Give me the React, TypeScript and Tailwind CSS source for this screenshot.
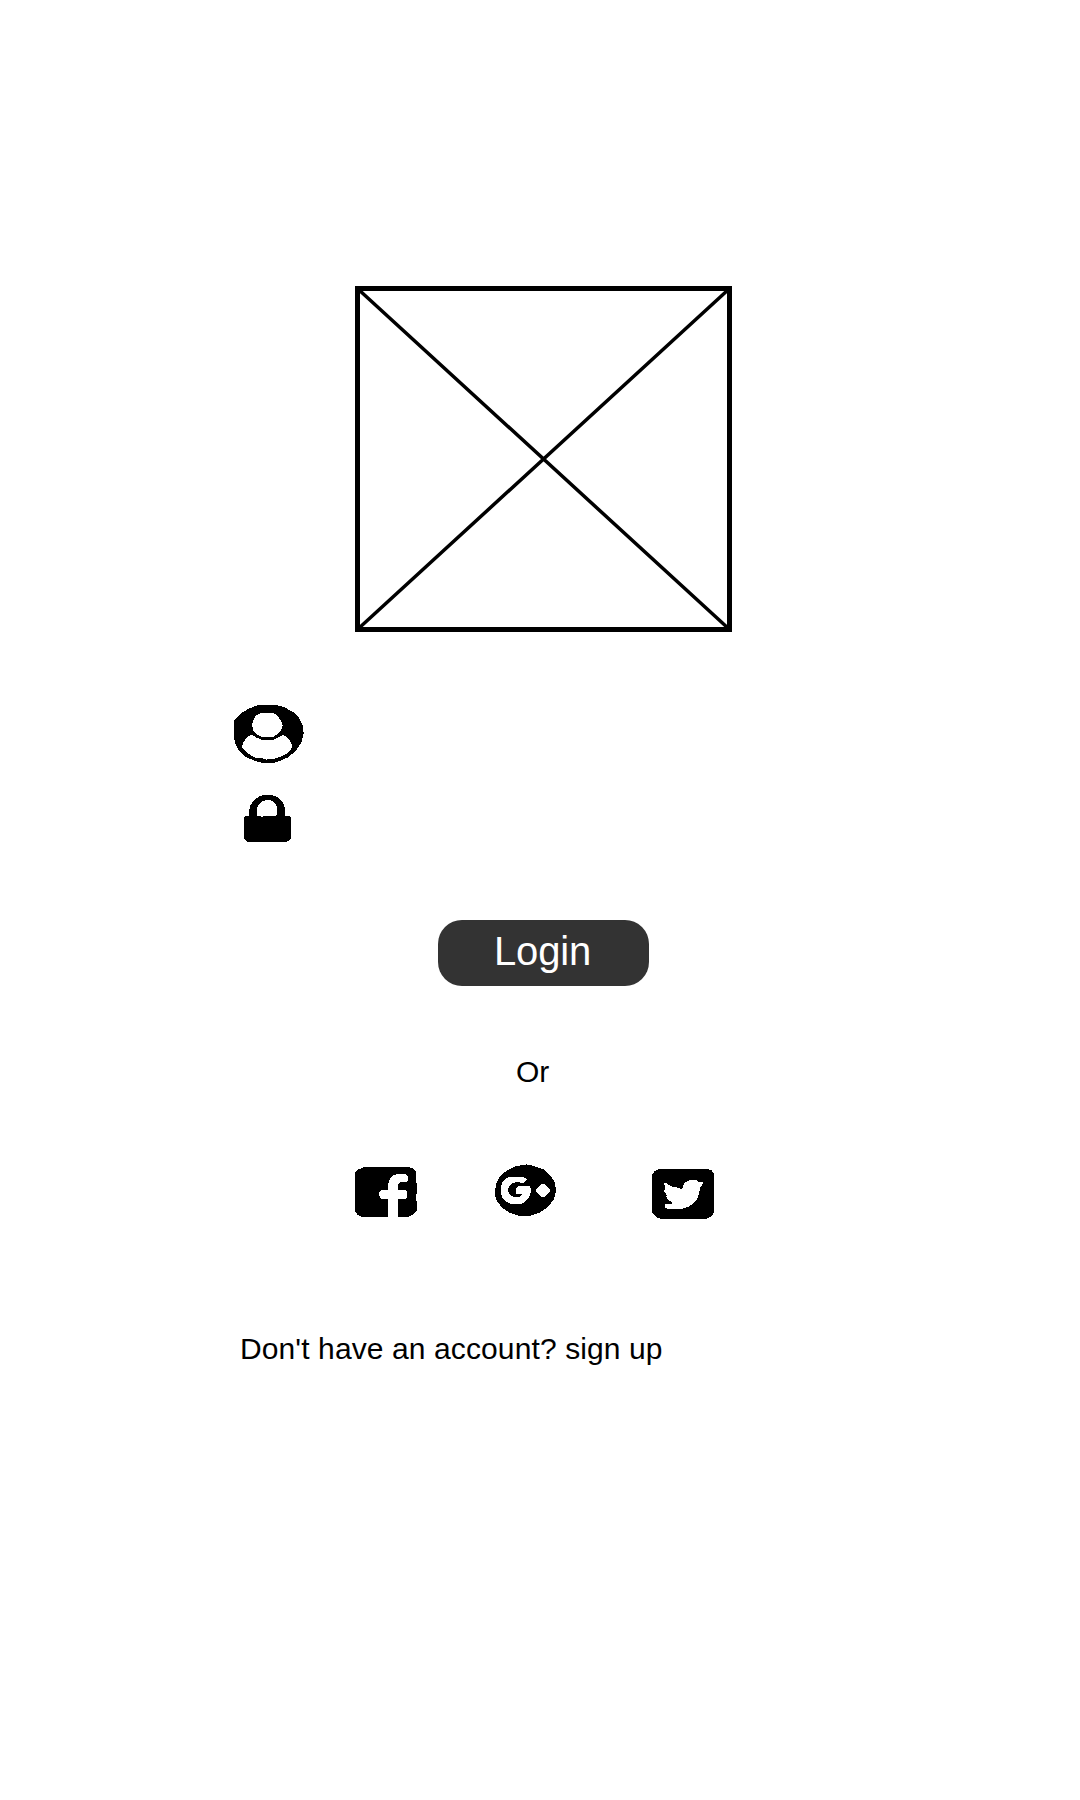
const UserIcon = () => (
  <svg width="70" height="59" viewBox="42 42 210 177" shapeRendering="crispEdges" aria-hidden="true">
    <path d="M42 90L60 72L84 57L112 46L130 44H166L192 51L219 66L238 85L248 106L251 129L245 156L229 181L204 202L180 213L160 219H130L105 213L76 200L57 182L47 163L42 146Z" />
    <path fill="#fff" d="M122 69H159L171 76L183 92L188 105L183 121L173 132L160 141H124L110 132L100 121L96 105L99 92L108 76Z" />
    <path fill="#fff" d="M93 133L110 143L126 150H159L175 142L190 134L205 145L215 162V174L206 187L190 196L172 204L155 208L150 206L138 209L128 205H112L92 196L77 185L66 172L69 159L79 144Z" />
  </svg>
);

const LockIcon = () => (
  <svg width="47" height="47" viewBox="42 45 141 141" shapeRendering="crispEdges" aria-hidden="true">
    <path d="M42 113L48 108H57V93L61 77L72 61L87 50L102 45H122L138 49L153 60L162 73L165 88V108H178L183 114V174L178 181L168 186H54L47 181L42 174Z" />
    <path fill="#fff" d="M82 108V83L88 72L99 63L108 60H118L130 64L139 74L142 90V105L136 108H99L96 111L90 108Z" />
  </svg>
);

const FacebookIcon = () => (
  <svg width="62" height="50" viewBox="45 51 186 150" shapeRendering="crispEdges" aria-hidden="true">
    <path d="M45 69L54 59L72 51H207L222 57L229 68V99L231 104V128L228 134V150L231 158V180L222 192L207 200L177 201H66L51 193L45 182Z" />
    <path fill="#fff" d="M144 201V147H124L118 138V126L123 120H144V106L149 88L159 77L174 72H195L204 78V92L199 96H181L174 104V120H196L202 127V140L196 147H174V201Z" />
  </svg>
);

const GooglePlusIcon = () => (
  <svg width="61" height="52" viewBox="45 42 183 156" shapeRendering="crispEdges" aria-hidden="true">
    <path d="M45 126L48 102L60 79L81 61L105 49L130 45L139 43L162 48L190 58L211 76L225 98L228 123L221 149L203 172L177 189L150 197H116L90 189L66 173L51 153L46 139Z" />
    <path fill="#fff" d="M89 80H126L142 88L130 101L117 97H105L93 102L85 114V126L91 135L103 142H115L124 137L127 132H108V114L114 109H151L153 126L147 143L136 155L124 162H94L77 154L66 141L62 126V110L68 96L78 86Z" />
    <path fill="#fff" d="M184 101H193L199 109L211 119V124L199 134L193 141H184L178 133L168 125V118L178 110Z" />
  </svg>
);

const TwitterIcon = () => (
  <svg width="62" height="50" viewBox="36 57 186 150" shapeRendering="crispEdges" aria-hidden="true">
    <path d="M36 75L43 64L57 57H204L216 62L222 73V184L217 196L204 205L195 207H66L50 202L39 192L36 184Z" />
    <path fill="#fff" d="M72 97L80 100L91 108L108 112L124 117L130 114V105L137 96L150 90H168L175 95L189 97L186 106L180 112L178 129L171 147L158 163L141 172L123 178H85L75 172V163L96 161V157L84 150L78 139L81 136L73 124L75 114Z" />
  </svg>
);

export default function App() {
  return (
    <main className="flex h-[1800px] w-[1080px] flex-col items-start bg-white pt-[286px] font-['Liberation_Sans',Arial,sans-serif] text-[30px] leading-10 text-black">
      <svg className="ml-[355px]" width="377" height="346" viewBox="0 0 377 346" fill="none" stroke="#000" aria-hidden="true">
        <rect x="2.5" y="2.5" width="372" height="341" strokeWidth="5" />
        <path d="M3 3L374 343M374 3L3 343" strokeWidth="3.5" />
      </svg>

      <div className="mt-[72px] ml-[234px] flex w-[70px] flex-col items-start gap-8">
        <UserIcon />
        <div className="ml-2.5">
          <LockIcon />
        </div>
      </div>

      <button className="mt-[78px] ml-[438px] flex h-[66px] w-[211px] items-center justify-center rounded-[24px] bg-[#333333] pr-0.5 pb-1 text-[40px] leading-none tracking-[-0.2px] text-white">
        Login
      </button>

      <p className="mt-[66px] ml-[516px]">Or</p>

      <div className="mt-[72px] ml-[355px] flex items-start">
        <div className="mt-[3px]">
          <FacebookIcon />
        </div>
        <div className="ml-[78px]">
          <GooglePlusIcon />
        </div>
        <div className="mt-[5px] ml-24">
          <TwitterIcon />
        </div>
      </div>

      <p className="mt-[110px] ml-[240px] whitespace-nowrap tracking-[0.11px]">Don't have an account? sign up</p>
    </main>
  );
}
